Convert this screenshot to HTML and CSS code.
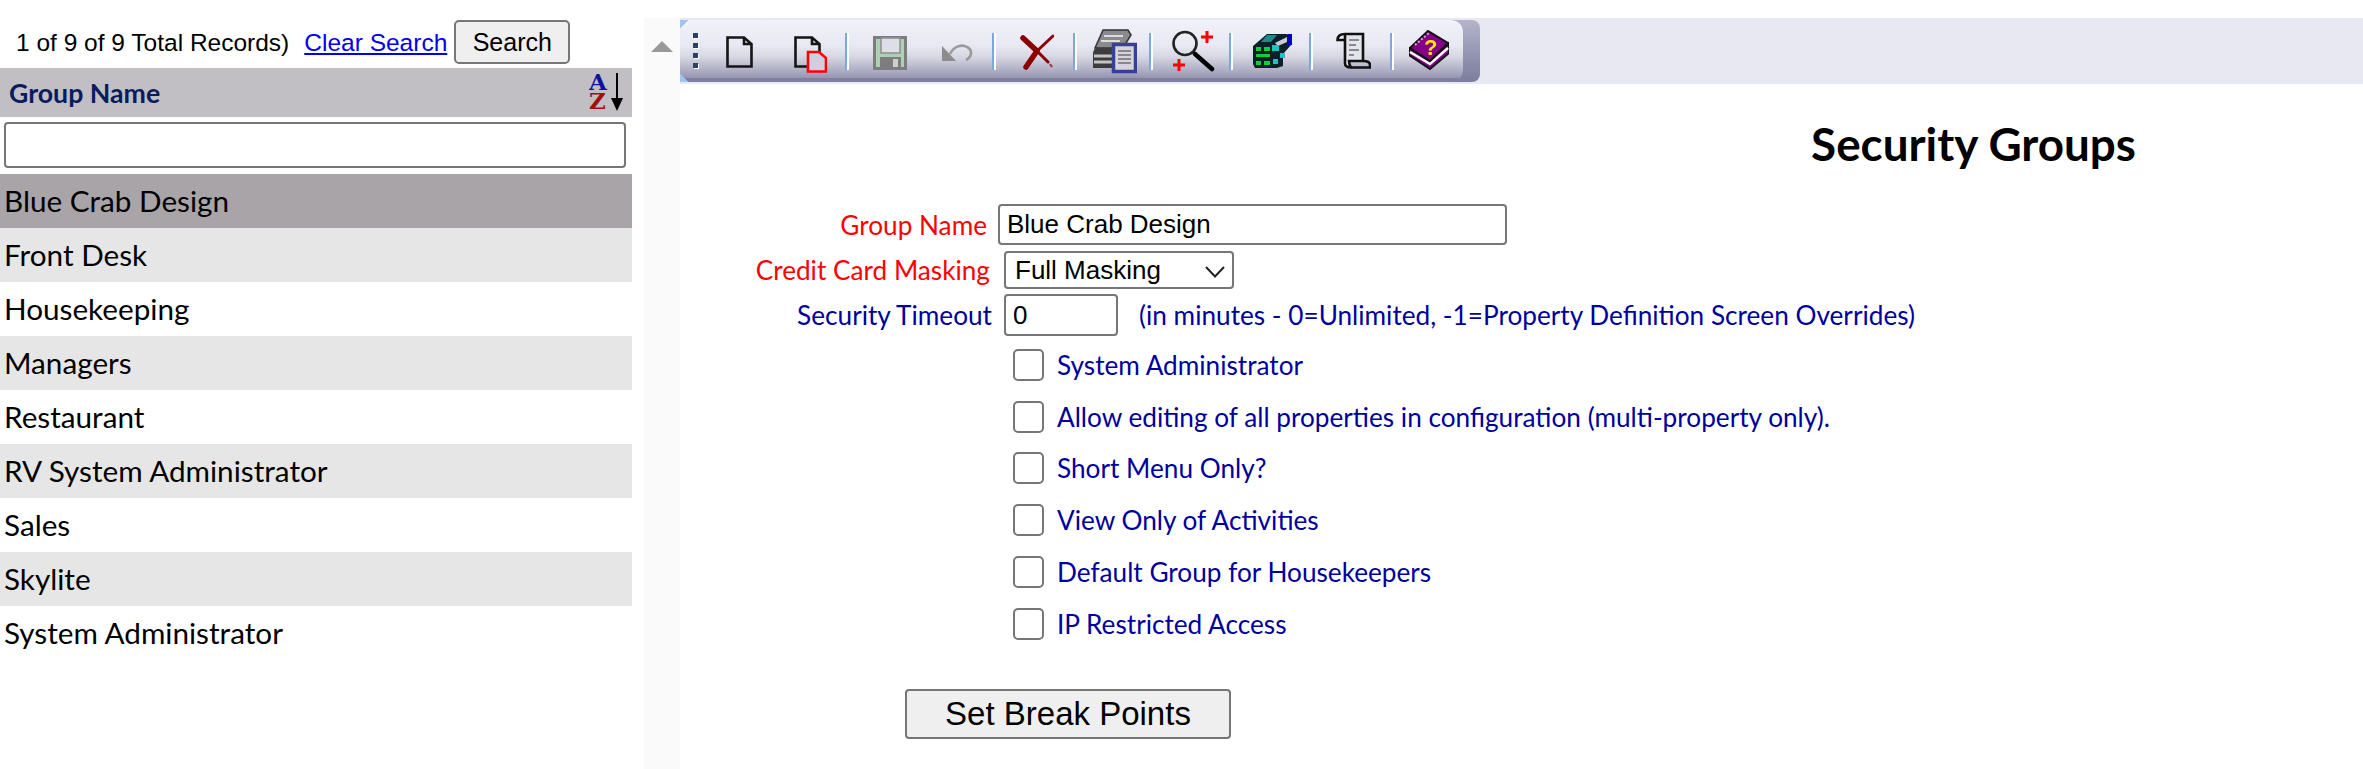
FILE: index.html
```html
<!DOCTYPE html>
<html lang="en">
<head>
<meta charset="utf-8">
<title>Security Groups</title>
<link rel="stylesheet" href="styles.css">
</head>
<body>
<div class="page">
  <aside class="side">
    <div class="pager">
      <span class="pager-text">1 of 9 of 9 Total Records)</span>
      <a class="clear" href="#">Clear Search</a>
      <button class="search-btn" type="button">Search</button>
    </div>
    <div class="col-head">
      <span>Group Name</span>
      <svg class="sort" width="36" height="49" viewBox="0 0 36 49">
        <text class="sort-a" x="0" y="22">A</text>
        <text class="sort-z" x="0" y="41">Z</text>
        <path d="M28 5V34" stroke="#000" stroke-width="2" fill="none"/>
        <path d="M22 30H34L28 43Z" fill="#000"/>
      </svg>
    </div>
    <input class="filter" type="text">
    <ul class="list">
      <li class="selected">Blue Crab Design</li>
      <li class="alt">Front Desk</li>
      <li>Housekeeping</li>
      <li class="alt">Managers</li>
      <li>Restaurant</li>
      <li class="alt">RV System Administrator</li>
      <li>Sales</li>
      <li class="alt">Skylite</li>
      <li>System Administrator</li>
    </ul>
  </aside>
  <div class="gutter"><span class="tri"></span></div>
  <main class="main">
    <div class="band">
      <div class="toolbar">
        <div class="toolbar-main">
          <svg class="ic grip" width="8" height="46" viewBox="0 0 8 46"><g fill="#fff"><rect x="2" y="6" width="5" height="5"/><rect x="2" y="16" width="5" height="5"/><rect x="2" y="26" width="5" height="5"/><rect x="2" y="36" width="5" height="5"/></g><g fill="#2d4068"><rect x="1" y="5" width="5" height="5"/><rect x="1" y="15" width="5" height="5"/><rect x="1" y="25" width="5" height="5"/><rect x="1" y="35" width="5" height="5"/></g></svg>
          <svg class="ic i-doc" width="27" height="46" viewBox="0 0 27 46"><path d="M1.5 9.5H18L25.5 16V38.5H1.5Z M18 9.5V16H25.5" fill="none" stroke="#151515" stroke-width="2.6"/></svg>
          <svg class="ic i-copy" width="33" height="46" viewBox="0 0 33 46"><path d="M1.5 9.5H18L25.5 16V38.5H1.5Z M18 9.5V16H25.5" fill="none" stroke="#151515" stroke-width="2.6"/><path d="M14 24H25L32 30V43.5H14Z" fill="#cfcfde" stroke="#f00" stroke-width="2.6"/></svg>
          <span class="sep s1"></span>
          <svg class="ic i-save" width="34" height="46" viewBox="0 0 34 46"><rect x="1.5" y="9.5" width="31" height="31" fill="#a9d3b3" stroke="#7d7d7d" stroke-width="3"/><rect x="8" y="10" width="19" height="15" fill="#dedee8" stroke="#8f8f8f" stroke-width="1.5"/><rect x="7" y="29" width="21" height="12" fill="#7d7d7d"/><rect x="20" y="31" width="5" height="8" fill="#cfcfcf"/></svg>
          <svg class="ic i-undo" width="31" height="46" viewBox="0 0 31 46"><path d="M8 26C12 18 20 16 25 19C31 22 30 29 24 32" fill="none" stroke="#9a9a9a" stroke-width="2.6"/><path d="M0 18V33H14Z" fill="#8c8c8c"/></svg>
          <span class="sep s2"></span>
          <svg class="ic i-del" width="34" height="46" viewBox="0 0 34 46"><g fill="none" stroke="#8b0000" stroke-linecap="round"><path d="M3 10L17 23M17 23L6 39" stroke-width="5.5"/><path d="M17 23L28 34M17 23L33 8" stroke-width="3"/></g><path d="M30 36L32 39" stroke="#a03030" stroke-width="2" fill="none"/></svg>
          <span class="sep s3"></span>
          <svg class="ic i-print" width="44" height="46" viewBox="0 0 44 46"><path d="M10 2H35L38 7L30 20H2Z" fill="#8a8a8e" stroke="#333" stroke-width="1.5"/><path d="M11 8H30M8 13H27" stroke="#ddd" stroke-width="2"/><path d="M0 26C0 22 2 20 5 20H36C40 20 42 23 42 26V40H0Z" fill="#3c3c3e"/><path d="M1 28H22M1 34H22" stroke="#c4c4c4" stroke-width="3"/><rect x="20.5" y="16.5" width="22" height="27" fill="#d4d4da" stroke="#363f9e" stroke-width="3.5"/><path d="M25 23H38M25 27H38M25 31H38M25 35H38" stroke="#888" stroke-width="2"/></svg>
          <span class="sep s4"></span>
          <svg class="ic i-find" width="43" height="46" viewBox="0 0 43 46"><circle cx="13" cy="15.5" r="11.5" fill="none" stroke="#222" stroke-width="2.6"/><path d="M23 26L40 41" stroke="#000" stroke-width="4.5" stroke-linecap="round"/><path d="M35 3V15M29 9H41M7 31V43M1 37H13" stroke="#f00" stroke-width="3"/></svg>
          <span class="sep s5"></span>
          <svg class="ic i-cube" width="39" height="46" viewBox="0 0 39 46"><path d="M0 18L14 6H34L39 8V16L30 26V38L24 40H2L0 36Z" fill="#0c2028"/><path d="M14 7L24 7L18 14H8Z" fill="#1c8a8a"/><path d="M22 15L34 9V14L25 18Z" fill="#c8ccd8"/><rect x="35" y="6" width="4" height="11" fill="#0000c0"/><g fill="#0fd03a"><rect x="3" y="19" width="5" height="4"/><rect x="11" y="19" width="6" height="4"/><rect x="3" y="26" width="14" height="3"/><rect x="3" y="33" width="5" height="4"/><rect x="11" y="33" width="6" height="4"/></g><g fill="#14c8c8"><rect x="19" y="17" width="7" height="6"/><rect x="27" y="25" width="5" height="5"/><rect x="20" y="31" width="5" height="5"/></g></svg>
          <span class="sep s6"></span>
          <svg class="ic i-scroll" width="35" height="46" viewBox="0 0 35 46"><path d="M9 6H27V33H14V39H9Z" fill="#e4e4ec"/><g fill="none" stroke="#111" stroke-width="2.6"><path d="M9 6H27V32"/><path d="M9 6C4 6 1.5 8 1.5 12H9"/><path d="M9 6V35C9 38 11 39.5 15 39.5H34V37C34 34 31 33 27 33H13C13 36 14 38 15 39.5"/></g><path d="M13 12H23M13 17H20M13 22H23M13 27H18" stroke="#8a8a8a" stroke-width="2"/></svg>
          <span class="sep s7"></span>
          <svg class="ic i-help" width="40" height="46" viewBox="0 0 40 46"><path d="M0 20V27L21 41L40 25V15L21 33Z" fill="#860086" stroke="#111" stroke-width="2"/><path d="M1 24L21 36L39 20" fill="none" stroke="#fff" stroke-width="2.5"/><path d="M19 3L1 20L21 33L39 15Z" fill="#860086" stroke="#111" stroke-width="2"/><path d="M6 17L20 5" stroke="#e0a0e0" stroke-width="2" stroke-dasharray="2 2"/><text class="help-q" x="15" y="27">?</text></svg>
        </div>
      </div>
    </div>
    <h1 class="title">Security Groups</h1>
    <form class="form">
      <div class="row r-name">
        <label class="label req">Group Name</label>
        <input class="text name-input" type="text" value="Blue Crab Design">
      </div>
      <div class="row r-mask">
        <label class="label req">Credit Card Masking</label>
        <select class="text mask-select"><option>Full Masking</option></select>
      </div>
      <div class="row r-time">
        <label class="label">Security Timeout</label>
        <input class="text time-input" type="text" value="0">
        <span class="hint">(in minutes - 0=Unlimited, -1=Property Definition Screen Overrides)</span>
      </div>
      <div class="checks">
        <label class="check"><input type="checkbox"><span>System Administrator</span></label>
        <label class="check"><input type="checkbox"><span>Allow editing of all properties in configuration (multi-property only).</span></label>
        <label class="check"><input type="checkbox"><span>Short Menu Only?</span></label>
        <label class="check"><input type="checkbox"><span>View Only of Activities</span></label>
        <label class="check"><input type="checkbox"><span>Default Group for Housekeepers</span></label>
        <label class="check"><input type="checkbox"><span>IP Restricted Access</span></label>
      </div>
      <button class="break-btn" type="button">Set Break Points</button>
    </form>
  </main>
</div>
</body>
</html>
```
FILE: styles.css
```css
* { box-sizing: border-box; }
html, body { margin: 0; padding: 0; background: #fff; }
body { font-family: "Liberation Sans", Arial, sans-serif; font-size: 24.5px; color: #000; }
.page { display: flex; width: 2363px; height: 769px; overflow: hidden; }

/* left column */
.side { flex: none; width: 632px; }
.pager { display: flex; align-items: center; height: 68px; padding: 20px 0 4px 16px; white-space: nowrap; }
.pager-text, .clear { padding-top: 2px; }
.clear { margin-left: 15px; color: #0000ee; text-decoration: underline; }
.search-btn { margin-left: 7px; width: 116px; height: 44px; padding: 0; font: 25px "Liberation Sans", sans-serif; color: #000; background: #efefef; border: 2px solid #767676; border-radius: 5px; }
.col-head { display: flex; align-items: center; justify-content: space-between; height: 49px; padding: 0 7px 0 9px; background: #c1bfc3; font: bold 26.7px Lato, sans-serif; color: #0b1c5c; }
.sort { display: block; }
.sort-a { font: bold 23px "DejaVu Serif", serif; fill: #1010a0; }
.sort-z { font: bold 23px "DejaVu Serif", serif; fill: #a01010; }
.filter { display: block; width: 622px; height: 46px; margin: 5px 0 6px 4px; border: 2px solid #767676; border-radius: 4px; background: #fff; }
.list { margin: 0; padding: 0; list-style: none; font: 29.7px Lato, sans-serif; }
.list li { height: 54px; line-height: 53px; padding-left: 4px; }
.list .selected { background: #a8a4a8; }
.list .alt { background: #e6e6e6; }

/* gutter */
.gutter { flex: none; width: 36px; margin: 18px 0 0 12px; background: #fafafa; }
.tri { display: block; width: 0; height: 0; margin: 23px 0 0 7px; border-left: 11px solid transparent; border-right: 11px solid transparent; border-bottom: 11px solid #999; }

/* main */
.main { flex: 1; min-width: 0; }
.band { height: 66px; margin-top: 18px; background: #e8e8f2; padding-top: 2px; }
.toolbar { width: 800px; height: 62px; background: linear-gradient(#b4b4cc, #7c7c9c); border-radius: 0 8px 8px 0; }
.toolbar-main { display: flex; align-items: center; width: 783px; height: 62px; border-radius: 0 12px 12px 0;
  background:
    linear-gradient(135deg, #a0c4f0 6px, transparent 6px) no-repeat,
    linear-gradient(45deg, #a0c4f0 6px, transparent 6px) no-repeat,
    linear-gradient(#f1f1f9 0, #e9e9f3 40%, #d9d9e5 58%, #b4b4ca 78%, #9696b2 93%, #80809e 94%, #80809e 100%);
}
.ic { flex: none; display: block; filter: blur(0.4px); }
.sep { flex: none; width: 4px; height: 37px; background: linear-gradient(90deg, #7ea6e0 50%, #fff 50%); filter: blur(0.4px); }
.grip { margin-left: 12px; }
.i-doc { margin-left: 26px; }
.i-copy { margin-left: 41px; }
.s1 { margin-left: 18px; }
.i-save { margin-left: 24px; }
.i-undo { margin-left: 35px; }
.s2 { margin-left: 19px; }
.i-del { margin-left: 24px; }
.s3 { margin-left: 19px; }
.i-print { margin-left: 16px; }
.s4 { margin-left: 12px; }
.i-find { margin-left: 19px; }
.s5 { margin-left: 14px; }
.i-cube { margin-left: 20px; }
.s6 { margin-left: 17px; }
.i-scroll { margin-left: 23px; }
.s7 { margin-left: 19px; }
.i-help { margin-left: 15px; }
.help-q { font: bold 22px "Liberation Sans", sans-serif; fill: #ffe800; }

.title { margin: 32px 0 32px; padding-right: 227px; height: 56px; text-align: right; font: bold 45.8px/56px Lato, sans-serif; color: #000; }
.form { display: block; }
.row { display: flex; align-items: center; }
.label { flex: none; text-align: right; font: 26.2px Lato, sans-serif; color: #00009c; }
.label.req { color: #f00; }
.text { height: 38px; border: 2px solid #767676; border-radius: 4px; background: #fff; font: 26px "Liberation Sans", sans-serif; color: #000; padding: 0 7px; }
.r-name { height: 41px; }
.r-name .label { width: 307px; margin-right: 11px; }
.name-input { width: 509px; height: 41px; }
.r-mask { height: 38px; margin-top: 6px; }
.r-mask .label { width: 310px; margin-right: 14px; }
.mask-select { width: 230px; appearance: none; padding: 0 0 0 9px; background: #fff url("data:image/svg+xml,%3Csvg xmlns='http://www.w3.org/2000/svg' width='20' height='12'%3E%3Cpath d='M1 1L10 10.500L19 1' fill='none' stroke='%23222' stroke-width='2'/%3E%3C/svg%3E") no-repeat 199px 13px; }
.r-time { height: 42px; margin-top: 5px; }
.r-time .label { width: 312px; margin-right: 12px; }
.time-input { width: 114px; height: 42px; }
.hint { margin-left: 21px; font: 26.2px Lato, sans-serif; color: #00009c; white-space: nowrap; }
.checks { margin: 3px 0 0 333px; }
.check { display: flex; align-items: center; height: 51.8px; font: 26.2px Lato, sans-serif; color: #00009c; }
.check input { appearance: none; flex: none; width: 31px; height: 32px; margin: 0 13px 0 0; background: #fff; border: 2px solid #767676; border-radius: 5px; }
.break-btn { display: block; width: 326px; height: 50px; margin: 39px 0 0 225px; padding: 0; font: 33px "Liberation Sans", sans-serif; color: #000; background: #efefef; border: 2px solid #767676; border-radius: 4px; }
```
